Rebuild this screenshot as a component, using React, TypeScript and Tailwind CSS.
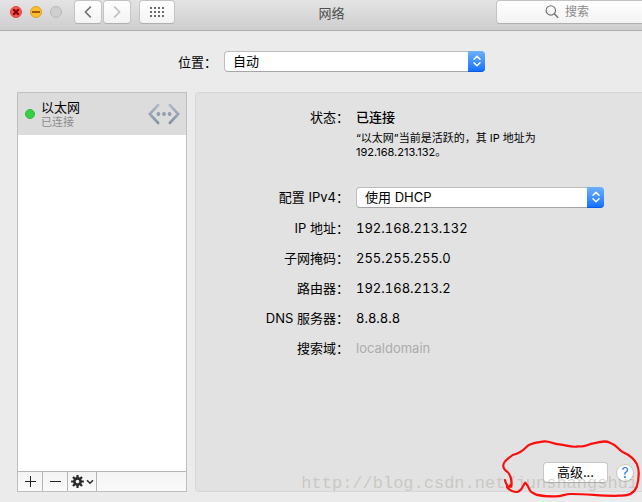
import { useState } from "react";
import type { ReactNode } from "react";

const NETWORK_INFO = [
  { label: "IP 地址", value: "192.168.213.132" },
  { label: "子网掩码", value: "255.255.255.0" },
  { label: "路由器", value: "192.168.213.2" },
  { label: "DNS 服务器", value: "8.8.8.8" },
];

export default function App() {
  return (
    <div className="relative flex min-h-screen flex-col overflow-hidden bg-[#ebebeb] font-['Inter','Noto_Sans_CJK_SC',sans-serif] text-[13px] leading-5 text-black">
      <TitleBar />
      <main className="flex flex-1 flex-col pb-2.5 pl-[17px]">
        <div className="flex items-center pt-5">
          <label className="w-[200px] text-right" htmlFor="location">
            位置：
          </label>
          <div className="ml-[7px] w-[261px]">
            <PopUp id="location" options={["自动", "编辑位置…"]} />
          </div>
        </div>
        <div className="mt-5 flex flex-1 gap-2">
          <Sidebar />
          <Details />
        </div>
      </main>
      <Annotation />
    </div>
  );
}

function TitleBar() {
  return (
    <header className="flex h-[31px] items-start border-b border-[#adadad] bg-linear-to-b from-[#e4e4e4] to-[#cecece] pl-2.5">
      <div className="flex gap-2 pt-1.5">
        <button
          aria-label="关闭"
          className="flex size-3 items-center justify-center rounded-full border border-[#e0443e] bg-[#fc5753]"
          type="button"
        >
          <svg className="size-2 shrink-0" viewBox="0 0 8 8">
            <path d="M1.3 1.3l5.4 5.4M6.7 1.3L1.3 6.7" stroke="#7e0508" strokeWidth="2.2" />
          </svg>
        </button>
        <button
          aria-label="最小化"
          className="flex size-3 items-center justify-center rounded-full border border-[#dfa023] bg-[#fdbc2e]"
          type="button"
        >
          <svg className="size-2 shrink-0" viewBox="0 0 8 8">
            <path d="M0 4h8" stroke="#985712" strokeWidth="2" />
          </svg>
        </button>
        <button
          aria-label="缩放"
          className="size-3 rounded-full border border-[#b9b9b9] bg-[#cfcfcf]"
          type="button"
        />
      </div>
      <div className="ml-3 flex gap-px">
        <ToolButton label="后退">
          <svg className="h-3 w-2" fill="none" viewBox="0 0 8 12">
            <path d="M6.8 .6L1.4 6l5.4 5.4" stroke="#737373" strokeWidth="1.6" />
          </svg>
        </ToolButton>
        <ToolButton label="前进">
          <svg className="h-3 w-2" fill="none" viewBox="0 0 8 12">
            <path d="M1.2 .6L6.6 6l-5.4 5.4" stroke="#c0c0c0" strokeWidth="1.6" />
          </svg>
        </ToolButton>
      </div>
      <button
        aria-label="显示全部"
        className="ml-2 flex h-6 w-9 items-center justify-center rounded border border-[#c4c4c4] border-b-[#b0b0b0] bg-linear-to-b from-white to-[#f3f3f3]"
        type="button"
      >
        <svg className="h-2.5 w-3.5" fill="#6b6b6b" viewBox="0 0 14 10">
          {[0, 4, 8].map((y) =>
            [0, 4, 8, 12].map((x) => (
              <rect height="2" key={`${x}-${y}`} width="2" x={x} y={y} />
            ))
          )}
        </svg>
      </button>
      <h1 className="flex-1 pt-[3px] pr-2 text-center text-[#4d4d4d]">网络</h1>
      <label className="flex h-6 w-[146px] items-center gap-1.5 rounded-l border border-r-0 border-[#c4c4c4] border-b-[#b0b0b0] bg-linear-to-b from-white to-[#f3f3f3] pl-12">
        <svg className="size-3.5 shrink-0" fill="none" viewBox="0 0 14 14">
          <circle cx="5.8" cy="5.4" r="4.7" stroke="#6e6e6e" strokeWidth="1.1" />
          <path d="M9.2 8.8l4 4" stroke="#6e6e6e" strokeWidth="1.3" />
        </svg>
        <input
          aria-label="搜索"
          className="w-full min-w-0 bg-transparent text-xs outline-none placeholder:text-[#8a8a8a]"
          placeholder="搜索"
          type="text"
        />
      </label>
    </header>
  );
}

function ToolButton({ label, children }: { label: string; children: ReactNode }) {
  return (
    <button
      aria-label={label}
      className="flex h-6 w-7 items-center justify-center rounded border border-[#c4c4c4] border-b-[#b0b0b0] bg-linear-to-b from-white to-[#f3f3f3]"
      type="button"
    >
      {children}
    </button>
  );
}

function PopUp({ id, options }: { id: string; options: string[] }) {
  const [value, setValue] = useState(options[0]);

  return (
    <div className="relative h-[21px]">
      <select
        className="block h-full w-full appearance-none rounded border border-[#bdbdbd] border-b-[#a6a6a6] bg-white pr-5 pl-2 leading-[19px] outline-none"
        id={id}
        onChange={(e) => setValue(e.target.value)}
        value={value}
      >
        {options.map((o) => (
          <option key={o}>{o}</option>
        ))}
      </select>
      <span className="pointer-events-none absolute inset-y-0 right-0 flex w-[17px] items-center justify-center rounded-r border-b border-[#0a5be0] bg-linear-to-b from-[#6cb1fb] to-[#1370fe]">
        <svg className="h-3 w-2" fill="none" viewBox="0 0 8 12">
          <path
            d="M1 4.2L4 1.2l3 3M1 7.8l3 3 3-3"
            stroke="white"
            strokeLinecap="round"
            strokeLinejoin="round"
            strokeWidth="1.5"
          />
        </svg>
      </span>
    </div>
  );
}

function Sidebar() {
  return (
    <aside className="flex w-[170px] flex-col border border-[#bfbfbf] bg-white">
      <button
        className="flex h-[42px] items-center bg-[#dcdcdc] pr-1.5 pl-[7px] text-left"
        type="button"
      >
        <span className="size-2.5 rounded-full border border-[#2cbb3e] bg-[#37cf46]" />
        <span className="ml-1.5 flex-1">
          <span className="block leading-4">以太网</span>
          <span className="block text-[11px] leading-[14px] text-[#8c8c8c]">已连接</span>
        </span>
        <EthernetIcon />
      </button>
      <div className="flex-1" />
      <div className="flex h-5 border-t border-[#b4b4b4] bg-linear-to-b from-[#f4f4f4] to-[#fafafa]">
        <button
          aria-label="添加"
          className="flex w-[25px] items-center justify-center border-r border-[#b4b4b4]"
          type="button"
        >
          <svg className="size-[11px]" viewBox="0 0 11 11">
            <path d="M5.5 0v11M0 5.5h11" stroke="#222" />
          </svg>
        </button>
        <button
          aria-label="移除"
          className="flex w-[25px] items-center justify-center border-r border-[#b4b4b4]"
          type="button"
        >
          <svg className="size-[11px]" viewBox="0 0 11 11">
            <path d="M0 5.5h11" stroke="#222" />
          </svg>
        </button>
        <button
          aria-label="操作"
          className="flex w-[29px] items-center justify-center gap-0.5 border-r border-[#b4b4b4]"
          type="button"
        >
          <svg className="size-[13px]" viewBox="-6.5 -6.5 13 13">
            {[0, 45, 90, 135].map((a) => (
              <path
                d="M0-6.4V-3M0 3v3.4"
                key={a}
                stroke="#2b2b2b"
                strokeWidth="2.2"
                transform={`rotate(${a})`}
              />
            ))}
            <circle fill="none" r="3.1" stroke="#2b2b2b" strokeWidth="2.6" />
          </svg>
          <svg className="h-1.5 w-2" fill="none" viewBox="0 0 8 6">
            <path d="M1 1.2l3 3 3-3" stroke="#2b2b2b" strokeWidth="1.5" />
          </svg>
        </button>
      </div>
    </aside>
  );
}

function EthernetIcon() {
  return (
    <svg className="h-[22px] w-8" fill="none" viewBox="0 0 32 22">
      <defs>
        <linearGradient id="steel" x1="0" x2="0" y1="0" y2="1">
          <stop offset="0" stopColor="#b0b9c8" />
          <stop offset="1" stopColor="#8791a3" />
        </linearGradient>
      </defs>
      <path
        d="M10.2 2L1.8 11l8.4 9M21.8 2l8.4 9-8.4 9"
        stroke="url(#steel)"
        strokeLinecap="round"
        strokeWidth="2.6"
      />
      <circle cx="10.4" cy="11" fill="#929cae" r="1.9" />
      <circle cx="16" cy="11" fill="#929cae" r="1.9" />
      <circle cx="21.6" cy="11" fill="#929cae" r="1.9" />
    </svg>
  );
}

function Details() {
  return (
    <section className="flex flex-1 flex-col rounded-l border border-r-0 border-[#d8d8d8] bg-[#e2e2e2]">
      <div className="flex flex-col gap-2.5 pt-3.5">
        <Row label="状态">
          <p className="font-medium">已连接</p>
          <p className="mt-1 mb-[18px] w-[200px] text-[11px] leading-[14px]">
            “以太网”当前是活跃的，其 IP 地址为 192.168.213.132。
          </p>
        </Row>
        <Row htmlFor="ipv4" label="配置 IPv4">
          <div className="w-[248px]">
            <PopUp id="ipv4" options={["使用 DHCP", "手动", "关闭"]} />
          </div>
        </Row>
        {NETWORK_INFO.map((item) => (
          <Row key={item.label} label={item.label}>
            <span className="tabular-nums">{item.value}</span>
          </Row>
        ))}
        <Row htmlFor="search-domain" label="搜索域">
          <input
            className="block h-5 w-full bg-transparent outline-none placeholder:text-[#acacac]"
            id="search-domain"
            placeholder="localdomain"
            type="text"
          />
        </Row>
      </div>
      <div className="mt-auto flex items-center justify-end gap-2 pr-2 pb-2">
        <button
          className="h-[21px] w-[65px] rounded border border-[#c6c6c6] border-b-[#adadad] bg-white leading-[19px]"
          type="button"
        >
          高级...
        </button>
        <button
          aria-label="帮助"
          className="flex size-[18px] items-center justify-center rounded-full border border-[#c6c6c6] border-b-[#adadad] bg-white text-[14px] leading-none text-[#1a7cf5]"
          type="button"
        >
          ?
        </button>
      </div>
    </section>
  );
}

function Row({
  label,
  htmlFor,
  children,
}: {
  label: string;
  htmlFor?: string;
  children: ReactNode;
}) {
  return (
    <div className="grid grid-cols-[153px_1fr] gap-[7px]">
      {htmlFor ? (
        <label className="text-right" htmlFor={htmlFor}>
          {label}：
        </label>
      ) : (
        <span className="text-right">{label}：</span>
      )}
      <div>{children}</div>
    </div>
  );
}

// Hand-drawn loop around the advanced button, plus the blog watermark
function Annotation() {
  return (
    <div className="pointer-events-none absolute right-0 bottom-0">
      <span className="absolute right-1 bottom-2 font-['Liberation_Mono',monospace] text-[17px] whitespace-nowrap text-[#aaa89c]/45">
        http://blog.csdn.net/junshangshui
      </span>
      <svg className="relative h-[72px] w-[152px]" fill="none" viewBox="0 0 456 216">
        <path
          d="M45 150C46 162 54 163 51 171L64 170C67 150 62 137 54 127C43 120 39 113 40 105C42 90 54 87 68 75C84 71 98 63 110 50C122 37 142 38 164 34C181 33 191 44 209 43C232 46 246 54 265 49C284 52 293 43 310 40C330 35 346 31 360 38C381 45 382 56 398 66C419 75 434 89 441 103C450 123 445 153 440 171C432 190 414 198 390 197C344 200 291 191 240 192C223 193 211 201 190 199C165 199 144 199 129 189C115 184 119 171 106 158C98 165 99 179 84 185C70 189 59 180 53 174L64 163"
          stroke="#f90d0d"
          strokeLinecap="round"
          strokeLinejoin="round"
          strokeWidth="6.5"
        />
      </svg>
    </div>
  );
}
